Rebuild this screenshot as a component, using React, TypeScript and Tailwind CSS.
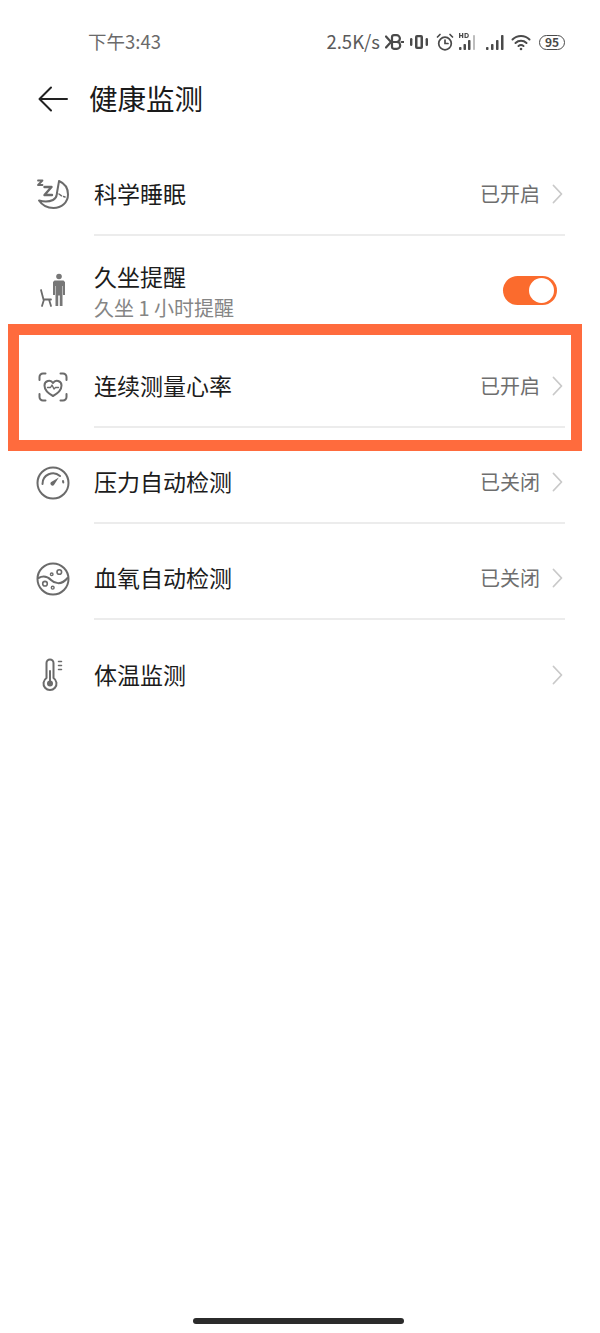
import type { ReactNode } from "react";

const ic = {
  fill: "none",
  stroke: "#6b6b6b",
  strokeWidth: 2,
  strokeLinecap: "round" as const,
  strokeLinejoin: "round" as const,
};

function SleepIcon() {
  return (
    <svg width="36" height="36" viewBox="0 0 36 36" {...ic}>
      <path d="M24 4c6 2.500 9 8 9 13.500C33 25.500 26.500 31 18.500 31 12 31 7 28 4 23.500c5 1.500 10 1.500 14-.5 4-2 3.500-4 4-7 .5-4 1.500-8 2-12z" />
      <path d="M9.500 10h7l-7 8h7.500" strokeWidth={2.400} />
      <path d="M3 3.500h4.500L3 8h4.500" strokeWidth={1.800} />
      <path d="M24 17l2.500 1.800M28.500 19.500l1.500.5" strokeWidth={1.500} />
    </svg>
  );
}

function SitIcon() {
  return (
    <svg width="36" height="36" viewBox="0 0 36 36">
      <circle cx="24" cy="3.500" r="2.800" fill="#777" />
      <path d="M19.500 7.500h9l1.500 1.500v13h-2v-9h-.5v20h-2.700V22.500h-1.600V33h-2.700V13H20v9h-2V9z" fill="#777" />
      <path d="M6 17l2.500 9.500H16M9 26.500L7 33M14 26.500L16 33" {...ic} strokeWidth={1.800} />
    </svg>
  );
}

function HeartIcon() {
  return (
    <svg width="30" height="30" viewBox="0 0 30 30" {...ic}>
      <path d="M7.500 1.500H5A3.500 3.500 0 0 0 1.500 5v3M22.500 1.500H25A3.500 3.500 0 0 1 28.500 5v3M7.500 28.500H5A3.500 3.500 0 0 1 1.500 25v-3M22.500 28.500H25a3.500 3.500 0 0 0 3.500-3.500v-3" />
      <path d="M15 24c-5.500-3-8.500-6.500-8.500-10.500a4.600 4.600 0 0 1 8.500-2.500 4.600 4.600 0 0 1 8.500 2.500C23.500 17.500 20.500 21 15 24z" />
      <path d="M9.500 15.500h3l1.500-2.500 2 4 1.500-1.500h3" strokeWidth={1.400} />
    </svg>
  );
}

function GaugeIcon() {
  return (
    <svg width="34" height="34" viewBox="0 0 34 34" {...ic}>
      <circle cx="17" cy="17" r="15.500" />
      <path d="M6.500 18A10.500 10.500 0 0 1 24 10" />
      <path d="M27 15l.3 1.500" />
      <path d="M14.800 16.200l8-4.700-5 7.800a2.200 2.200 0 0 1-3-3.100z" fill="#6b6b6b" stroke="none" />
    </svg>
  );
}

function OxygenIcon() {
  return (
    <svg width="34" height="34" viewBox="0 0 34 34" {...ic}>
      <circle cx="17" cy="17" r="15.500" />
      <path d="M2.500 16c5.500-3 9.500-1 12.500 2s10 6 16.500-2" />
      <circle cx="23.300" cy="10" r="2.300" strokeWidth={1.600} />
      <circle cx="15.700" cy="12.300" r="1.300" strokeWidth={1.400} />
      <circle cx="9" cy="21.700" r="2.300" strokeWidth={1.600} />
      <circle cx="16.700" cy="25.700" r="1.400" strokeWidth={1.400} />
    </svg>
  );
}

function ThermoIcon() {
  return (
    <svg width="26" height="34" viewBox="0 0 26 34" {...ic}>
      <path d="M6.500 20V5a3.500 3.500 0 0 1 7 0v15a6.500 6.500 0 1 1-7 0z" />
      <circle cx="10" cy="25.500" r="3" fill="#6b6b6b" stroke="none" />
      <path d="M10 24V13" strokeWidth={2} />
      <path d="M18.500 3.500h3M18.500 7.500h3M18.500 11.500h3" strokeWidth={1.500} />
    </svg>
  );
}

function Chevron() {
  return (
    <svg width="11" height="20" viewBox="0 0 11 20" fill="none" stroke="#c9c9c9" strokeWidth={1.800} strokeLinecap="round" strokeLinejoin="round">
      <path d="M1.500 1.500L9.500 10l-8 8.500" />
    </svg>
  );
}

function StatusIcons() {
  return (
    <div className="flex items-center">
      <svg className="ml-[5px]" width="19" height="16" viewBox="0 0 19 16" fill="none" stroke="#4a4a4a" strokeWidth={2.200} strokeLinecap="round">
        <path d="M1 2.500L6 8l-5 5.500" />
        <path d="M9 1.200h2.500a3.300 3.300 0 0 1 0 6.800H8m0 0h3.800a3.400 3.400 0 0 1 0 6.800H9A2 2 0 0 1 7 13V3a2 2 0 0 1 2-1.800" />
        <path d="M16.500 8h1.800" />
      </svg>
      <svg className="ml-[6px]" width="18" height="14" viewBox="0 0 18 14" fill="#4a4a4a">
        <rect x="0" y="3" width="2.400" height="8" rx="1.200" />
        <rect x="15.600" y="3" width="2.400" height="8" rx="1.200" />
        <path d="M7 0h4a2 2 0 0 1 2 2v10a2 2 0 0 1-2 2H7a2 2 0 0 1-2-2V2a2 2 0 0 1 2-2zm.5 2.200v9.600h3V2.200z" />
      </svg>
      <svg className="ml-[8px]" width="18" height="18" viewBox="0 0 18 18" fill="none" stroke="#4a4a4a" strokeWidth={1.700} strokeLinecap="round">
        <circle cx="9" cy="10.500" r="6.300" />
        <path d="M9 7v3.500h3M1.500 4L4 1.500M16.500 4L14 1.500" />
      </svg>
      <svg className="ml-[5px]" width="18" height="20" viewBox="0 0 18 20" fill="#4a4a4a">
        <rect x="0" y="15" width="2.500" height="3" rx=".8" />
        <rect x="4.500" y="12" width="2.500" height="6" rx=".8" />
        <rect x="9" y="8" width="2.500" height="10" rx=".8" />
        <rect x="14" y="3" width="2" height="15" rx=".8" fill="#bdbdbd" />
        <path d="M0 1h1.300v2H3V1h1.300v5H3V4.200H1.300V6H0zM5.500 1h1.800a2.500 2.500 0 0 1 0 5H5.500zm1.200 1.100v2.800h.6a1.400 1.400 0 0 0 0-2.800z" />
      </svg>
      <svg className="ml-[9px]" width="18" height="17" viewBox="0 0 18 17" fill="#4a4a4a">
        <rect x="0" y="13" width="2.500" height="3" rx=".8" />
        <rect x="5" y="10" width="2.500" height="6" rx=".8" />
        <rect x="10" y="6" width="2.500" height="10" rx=".8" />
        <rect x="15" y="1" width="2.500" height="15" rx=".8" />
      </svg>
      <svg className="ml-[7px]" width="20" height="17" viewBox="0 0 20 17" fill="none" stroke="#4a4a4a" strokeWidth={2} strokeLinecap="round">
        <path d="M1.500 5.500a12 12 0 0 1 17 0M4.500 9a8 8 0 0 1 11 0M7.500 12a4 4 0 0 1 5 0" />
        <circle cx="10" cy="15" r="1.300" fill="#4a4a4a" stroke="none" />
      </svg>
      <div className="ml-[8px] flex h-[15px] w-[26px] items-center justify-center rounded-full border-[1.500px] border-[#4a4a4a] text-[12px] font-bold leading-none text-[#4a4a4a]">
        95
      </div>
    </div>
  );
}

function Row({ icon, title, sub, right, last }: { icon: ReactNode; title: string; sub?: string; right?: ReactNode; last?: boolean }) {
  return (
    <div className="flex h-[96px] items-stretch pl-[30px] pr-[35px]">
      <div className="flex w-[64px] shrink-0 items-center pr-[24px] pt-[14px]">
        <div className="flex w-[46px] shrink-0 items-center justify-center">{icon}</div>
      </div>
      <div className={`flex min-w-0 flex-1 items-center justify-between pt-[14px] ${last ? "" : "border-b-2 border-[#ececec]"}`}>
        <div className={sub ? "pt-[3px]" : "pb-[2px]"}>
          <div className="text-[23px] leading-[32px] text-[#1c1c1c]">{title}</div>
          {sub && <div className="text-[20px] leading-[32px] text-[#858585]">{sub}</div>}
        </div>
        {right}
      </div>
    </div>
  );
}

function Value({ text }: { text?: string }) {
  return (
    <div className="mr-[2px] flex items-center gap-[12px]">
      {text && <span className="text-[20px] text-[#6e6e6e]">{text}</span>}
      <Chevron />
    </div>
  );
}

export default function App() {
  return (
    <div
      className="relative h-[1333px] w-[600px] overflow-hidden bg-white"
      style={{ fontFamily: '"Noto Sans CJK SC", "Noto Sans", sans-serif' }}
    >
      <div className="flex h-[84px] items-center justify-between pl-[88px] pr-[35px]">
        <span className="text-[18.500px] text-[#6a6a6a]">下午3:43</span>
        <div className="flex items-center">
          <span className="text-[18.500px] text-[#5a5a5a]">2.5K/s</span>
          <StatusIcons />
        </div>
      </div>

      <div className="flex h-[30px] items-center pl-[38px]">
        <svg width="30" height="26" viewBox="0 0 30 26" fill="none" stroke="#222" strokeWidth={2} strokeLinecap="round" strokeLinejoin="round">
          <path d="M29 13H2M13 1.500L1.500 13 13 24.500" />
        </svg>
        <span className="-mt-[2px] ml-[21px] text-[28.500px] text-[#1a1a1a]">健康监测</span>
      </div>

      <div className="mt-[26px]">
        <Row icon={<SleepIcon />} title="科学睡眠" right={<Value text="已开启" />} />
        <Row
          icon={<SitIcon />}
          title="久坐提醒"
          sub="久坐 1 小时提醒"
          right={
            <div className="mr-[8px] flex h-[29px] w-[54px] items-center justify-end rounded-full bg-[#fb6b2d] pr-[3px]">
              <div className="h-[25px] w-[25px] rounded-full bg-white" />
            </div>
          }
        />
        <Row icon={<HeartIcon />} title="连续测量心率" right={<Value text="已开启" />} />
        <Row icon={<GaugeIcon />} title="压力自动检测" right={<Value text="已关闭" />} />
        <Row icon={<OxygenIcon />} title="血氧自动检测" right={<Value text="已关闭" />} />
        <Row icon={<ThermoIcon />} title="体温监测" right={<Value />} last />
      </div>

      {/* annotation box drawn over the list */}
      <div className="absolute left-[8px] top-[324px] h-[127px] w-[574px] border-[11px] border-[#ff6b3d]" />

      <div className="absolute bottom-[9px] left-[193px] h-[6px] w-[211px] rounded-full bg-[#2b2b2b]" />
    </div>
  );
}
